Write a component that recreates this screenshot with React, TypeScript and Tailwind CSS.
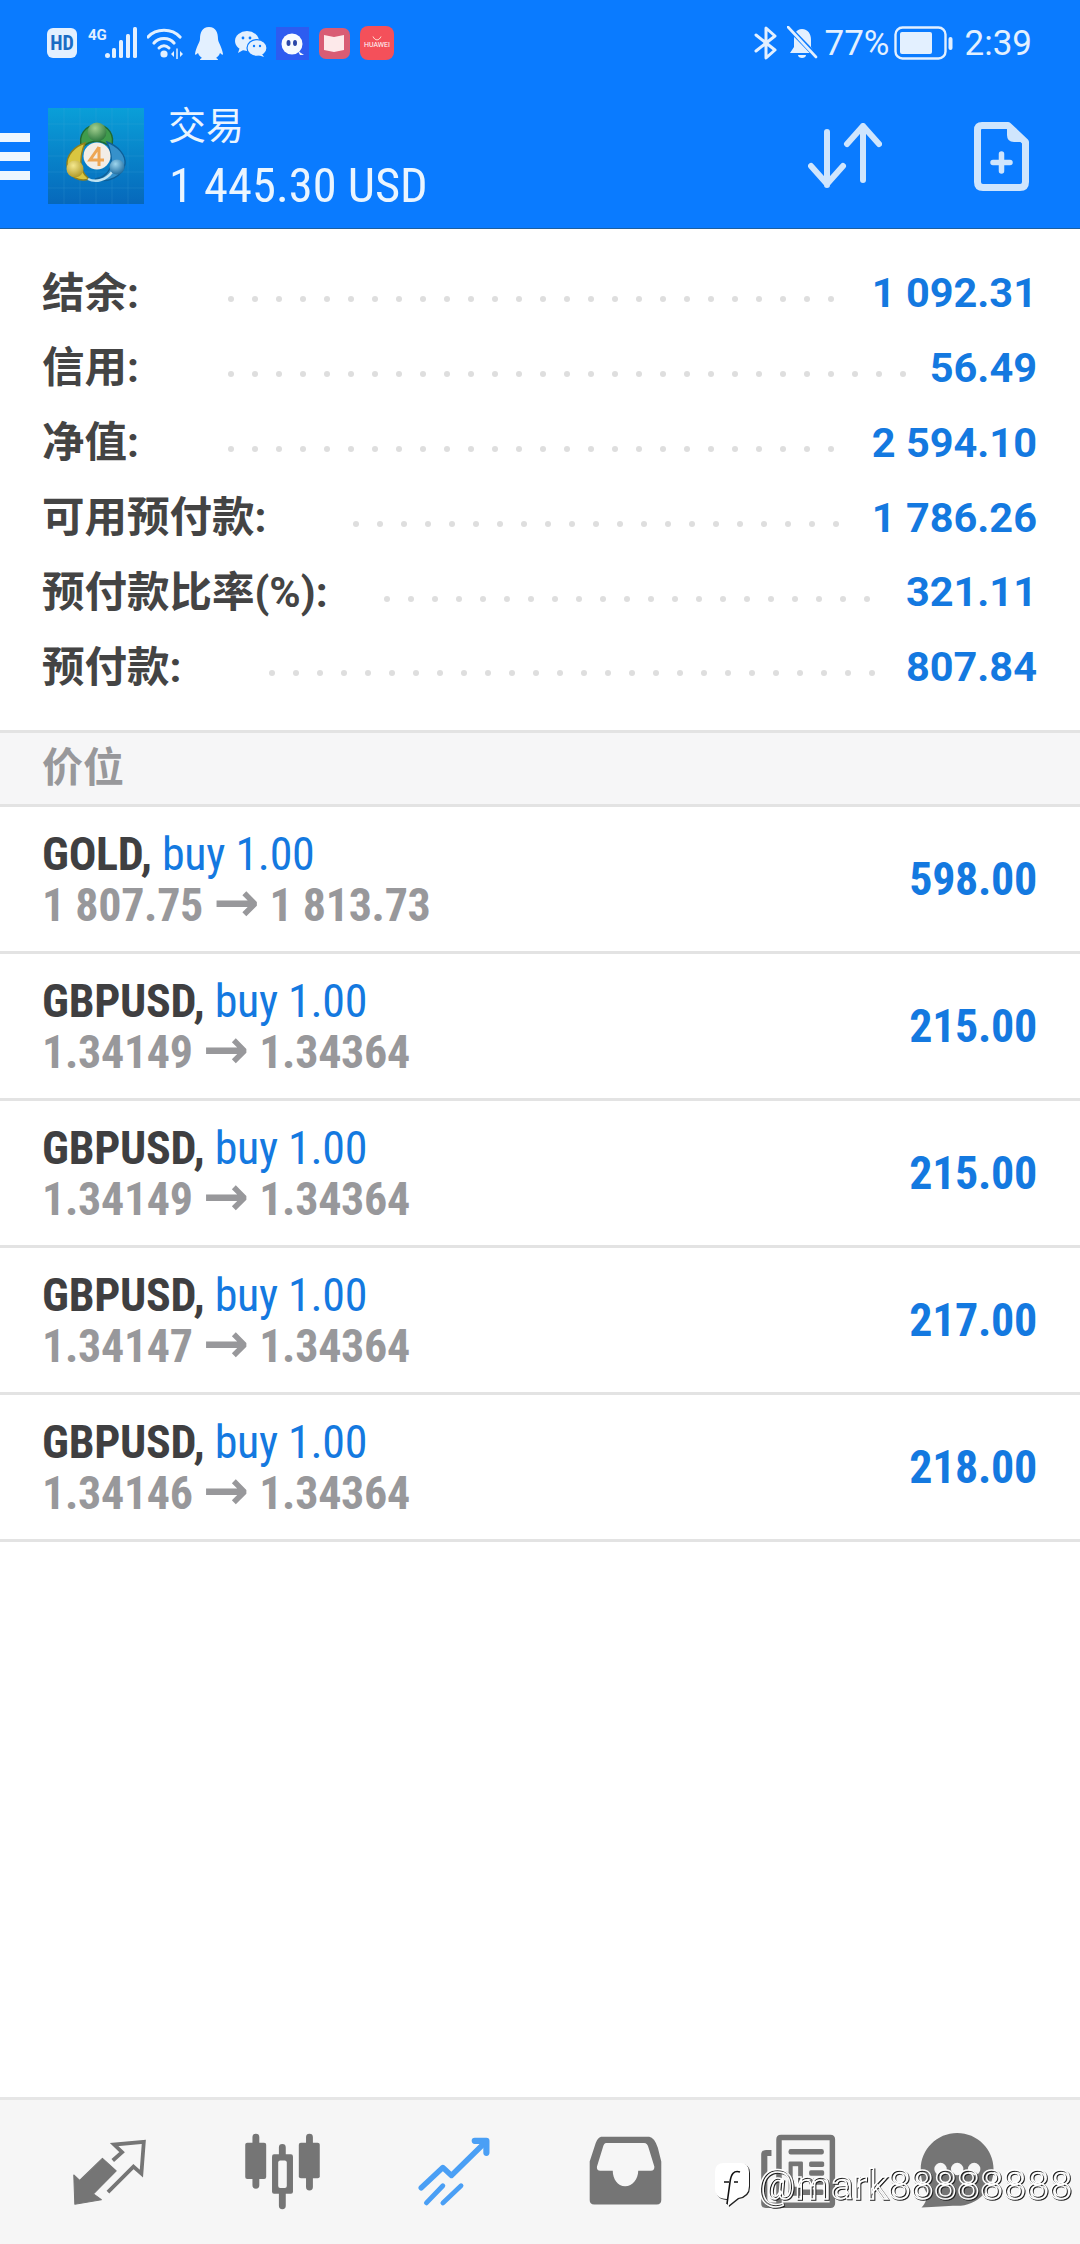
import React from "react";

const cond = "[font-stretch:75%]";

const accounts = [
  { label: "结余:", value: "1 092.31", w: "w-[186px]", n: 26 },
  { label: "信用:", value: "56.49", w: "w-[186px]", n: 29 },
  { label: "净值:", value: "2 594.10", w: "w-[186px]", n: 26 },
  { label: "可用预付款:", value: "1 786.26", w: "w-[311px]", n: 21 },
  { label: "预付款比率(%):", value: "321.11", w: "w-[342px]", n: 21 },
  { label: "预付款:", value: "807.84", w: "w-[227px]", n: 26 },
];

const trades = [
  { sym: "GOLD,", open: "1 807.75", close: "1 813.73", profit: "598.00" },
  { sym: "GBPUSD,", open: "1.34149", close: "1.34364", profit: "215.00" },
  { sym: "GBPUSD,", open: "1.34149", close: "1.34364", profit: "215.00" },
  { sym: "GBPUSD,", open: "1.34147", close: "1.34364", profit: "217.00" },
  { sym: "GBPUSD,", open: "1.34146", close: "1.34364", profit: "218.00" },
];

function Mt4Logo() {
  return (
    <svg width="96" height="96" viewBox="0 0 96 96" className="shrink-0">
      <defs>
        <linearGradient id="bgl" x1="0" y1="0" x2="0" y2="1">
          <stop offset="0" stopColor="#0a9fd8" />
          <stop offset="1" stopColor="#0668bb" />
        </linearGradient>
        <radialGradient id="gb" cx="0.4" cy="0.3" r="0.8">
          <stop offset="0" stopColor="#a3d08f" />
          <stop offset="1" stopColor="#1f6e35" />
        </radialGradient>
        <radialGradient id="yb" cx="0.4" cy="0.3" r="0.8">
          <stop offset="0" stopColor="#f4e88e" />
          <stop offset="1" stopColor="#a8901c" />
        </radialGradient>
        <radialGradient id="bb" cx="0.4" cy="0.3" r="0.8">
          <stop offset="0" stopColor="#9fd6ee" />
          <stop offset="1" stopColor="#0f5f96" />
        </radialGradient>
      </defs>
      <rect width="96" height="96" fill="url(#bgl)" />
      <path d="M16 0V96M32 0V96M48 0V96M64 0V96M80 0V96M0 16H96M0 32H96M0 48H96M0 64H96M0 80H96" stroke="#58b0e4" strokeOpacity="0.25" strokeWidth="0.7" />
      <path d="M34 40 C29 27 38 17 49 17 C60 17 68 27 63 40 C55 31 42 31 34 40Z" fill="#3f9b4c" stroke="#1f6a33" strokeWidth="1.4" />
      <path d="M37 35 C27 38 18 47 19 58 C21 70 32 74 41 71 C36 67 32 60 33 52 C33 45 35 40 37 35Z" fill="#d9c640" stroke="#8f7f1c" strokeWidth="1.4" />
      <path d="M59 34 C70 38 78 47 77 56 C75 68 60 76 47 71 C56 70 62 64 63 56 C64 48 62 41 59 34Z" fill="#3691cb" stroke="#0e5f98" strokeWidth="1.4" />
      <path d="M40 71 C48 75 58 72 64 64" fill="none" stroke="#bfe3f2" strokeWidth="2.5" />
      <circle cx="49" cy="24" r="9.5" fill="url(#gb)" />
      <circle cx="27" cy="61" r="8.5" fill="url(#yb)" />
      <circle cx="69" cy="59" r="7.5" fill="url(#bb)" />
      <circle cx="49" cy="48" r="13.5" fill="#f2ede6" />
      <path d="M51 39 L42 52 H56 M51 39 V58" fill="none" stroke="#eda654" strokeWidth="3" />
    </svg>
  );
}

function StatusLeft() {
  return (
    <div className="flex items-center ml-[47px] h-full">
      <div className="w-[30px] h-[30px] rounded-[6px] bg-[#e3f0ff] flex items-center justify-center text-[20px] font-bold text-[#1b6cc4] [font-family:Roboto,sans-serif] [font-stretch:75%] leading-none">HD</div>
      <svg width="50" height="32" viewBox="0 0 50 32" className="ml-[11px]" fill="#e3f0ff">
        <text x="0" y="13" fontSize="15" fontWeight="700" fontFamily="Roboto, sans-serif">4G</text>
        <circle cx="19.5" cy="28.5" r="2.5" />
        <rect x="24" y="21" width="4" height="10" rx="1.5" />
        <rect x="31" y="13" width="4" height="18" rx="1.5" />
        <rect x="38" y="7" width="4" height="24" rx="1.5" />
        <rect x="45" y="0" width="4" height="31" rx="1.5" />
      </svg>
      <svg width="38" height="32" viewBox="0 0 38 32" className="ml-[9px]" fill="none" stroke="#e3f0ff" strokeLinecap="round">
        <path d="M1 10 C9 1 25 1 33 10" strokeWidth="3.2" />
        <path d="M7 16 C12 10 22 10 27 16" strokeWidth="3.2" />
        <path d="M12 21 C15 18 19 18 22 21" strokeWidth="3" />
        <circle cx="17" cy="27" r="3.6" fill="#e3f0ff" stroke="none" />
        <path d="M27 24 L24 27 L27 30 Z M33 24 L36 27 L33 30 Z" fill="#e3f0ff" stroke="none" />
        <path d="M30 22 V32" strokeWidth="1.5" />
      </svg>
      <svg width="28" height="33" viewBox="0 0 28 33" className="ml-[10px]" fill="#e3f0ff">
        <path d="M14 0 C21 0 23 6 23 12 C23 15 27 20 28 27 C28 29 25 26 25 26 C24 29 22 30 21 31 C23 32 24 33 22 33 H6 C4 33 5 32 7 31 C6 30 4 29 3 26 C3 26 0 29 0 27 C1 20 5 15 5 12 C5 6 7 0 14 0Z" />
      </svg>
      <svg width="32" height="27" viewBox="0 0 32 27" className="ml-[12px]">
        <ellipse cx="12" cy="11" rx="12" ry="10" fill="#e3f0ff" />
        <path d="M5 17 L3 23 L10 19Z" fill="#e3f0ff" />
        <ellipse cx="22" cy="18" rx="10" ry="8.4" fill="#e3f0ff" stroke="#0a7bff" strokeWidth="1.2" />
        <path d="M27 24 L29 27 L23 25Z" fill="#e3f0ff" />
        <circle cx="8" cy="8" r="1.4" fill="#0a7bff" />
        <circle cx="15" cy="8" r="1.4" fill="#0a7bff" />
        <circle cx="19" cy="16" r="1.2" fill="#0a7bff" />
        <circle cx="25" cy="16" r="1.2" fill="#0a7bff" />
      </svg>
      <svg width="33" height="33" viewBox="0 0 33 33" className="ml-[9px]">
        <rect width="33" height="33" fill="#2d5cf0" />
        <circle cx="16" cy="17" r="10.5" fill="#f7fbff" />
        <path d="M22 24 L28 28 L24 28Z" fill="#f7fbff" />
        <ellipse cx="12.5" cy="16" rx="2" ry="3" fill="#2a47a8" />
        <ellipse cx="19" cy="16" rx="2" ry="3" fill="#2a47a8" />
      </svg>
      <div className="ml-[10px] w-[31px] h-[31px] rounded-[7px] bg-[#d95c74] flex items-center justify-center">
        <svg width="21" height="20" viewBox="0 0 21 20">
          <path d="M0 2 L10 4 L20 2 V17 L10 19 L0 17Z" fill="#fde9ea" />
        </svg>
      </div>
      <div className="ml-[10px] w-[34px] h-[34px] rounded-[8px] bg-[#f4505a] flex flex-col items-center justify-center">
        <svg width="10" height="5" viewBox="0 0 10 5" fill="none" stroke="#ffe" strokeWidth="0.8"><path d="M1 0.5 C3 5 7 5 9 0.5" /></svg>
        <span className="text-[7px] leading-[9px] text-white [font-family:Roboto,sans-serif]">HUAWEI</span>
      </div>
    </div>
  );
}

function StatusRight() {
  return (
    <div className="flex items-center mr-[48px] h-full text-[#e3f0ff] [font-family:Roboto,sans-serif] text-[35px] leading-none">
      <svg width="24" height="34" viewBox="0 0 24 34" fill="none" stroke="#e3f0ff" strokeWidth="3" strokeLinejoin="round" strokeLinecap="round">
        <path d="M2 9 L21 24 L12 32 V2 L21 10 L2 25" />
      </svg>
      <svg width="31" height="34" viewBox="0 0 31 34" className="ml-[9px]" fill="#e3f0ff">
        <path d="M15 3 C21 3 24 8 24 14 V21 L28 27 H3 L7 21 V14 C7 8 9 3 15 3Z" />
        <path d="M11 29 H19 C19 33 11 33 11 29Z" />
        <path d="M2 2 L30 31" stroke="#0a7bff" strokeWidth="5" />
        <path d="M1 1 L29 31" stroke="#e3f0ff" strokeWidth="2.6" strokeLinecap="round" />
      </svg>
      <span className="ml-[7px] w-[64px]">77%</span>
      <svg width="59" height="34" viewBox="0 0 59 34" className="ml-[5px]">
        <rect x="1.5" y="1.5" width="50" height="31" rx="7" fill="none" stroke="#e3f0ff" strokeWidth="2.4" />
        <rect x="6" y="6" width="32" height="22" rx="2" fill="#e3f0ff" />
        <rect x="54.5" y="11" width="4" height="13" rx="2" fill="#e3f0ff" />
      </svg>
      <span className="ml-[12px]">2:39</span>
    </div>
  );
}

function Swap() {
  return (
    <svg width="74" height="66" viewBox="0 0 74 66" fill="none" stroke="#cfe5fd" strokeWidth="6" strokeLinecap="round" strokeLinejoin="round">
      <path d="M19 9 V62 M3 43 L19 61 L35 43" />
      <path d="M55 3 V57 M39 21 L55 3 L71 21" />
    </svg>
  );
}

function NewDoc() {
  return (
    <svg width="55" height="69" viewBox="0 0 55 69" fill="none">
      <path d="M8 3.5 H34 L51.5 20 V60 Q51.5 65.5 46 65.5 H9 Q3.5 65.5 3.5 60 V8 Q3.5 3.5 8 3.5Z" stroke="#cfe5fd" strokeWidth="7" strokeLinejoin="round" />
      <path d="M33 2 L53 20 H40 Q33 20 33 13Z" fill="#cfe5fd" />
      <path d="M27.5 32 V49 M19 40.5 H36" stroke="#cfe5fd" strokeWidth="5.5" strokeLinecap="round" />
    </svg>
  );
}

const G = "#757575";
const Nav1 = () => (
  <svg width="76" height="69" viewBox="210 170 220 200">
    <path d="M215 280 L232 296 L298 232 L338 268 L272 335 L295 352 L218 365Z" fill={G} strokeLinejoin="round" stroke={G} strokeWidth="3" />
    <path d="M328 238 L355 214 L332 192 L418 184 L411 276 L388 256 L314 330" fill="none" stroke={G} strokeWidth="11" />
  </svg>
);
const Nav2 = () => (
  <svg width="81" height="79" viewBox="700 155 235 230" fill={G}>
    <path d="M740 170 V310 M817 200 V370 M896 170 V315" stroke={G} strokeWidth="20" strokeLinecap="round" />
    <rect x="709" y="186" width="61" height="106" rx="6" />
    <rect x="787" y="220" width="61" height="115" rx="6" />
    <rect x="865" y="186" width="61" height="104" rx="6" />
    <rect x="805" y="238" width="25" height="80" rx="6" fill="#f6f6f6" />
  </svg>
);
const Nav3 = () => (
  <svg width="78" height="72" viewBox="1205 160 225 210" fill="none" stroke="#4a9ff5" strokeLinecap="round" strokeLinejoin="round">
    <path d="M1222 314 L1285 255 L1310 278 L1405 185" strokeWidth="16" />
    <path d="M1378 177 H1412 V212" strokeWidth="18" />
    <path d="M1237 358 L1285 308 M1285 358 L1338 308" strokeWidth="14" />
  </svg>
);
const Nav4 = () => (
  <svg width="78" height="74" viewBox="140 160 225 215">
    <path fillRule="evenodd" fill={G} d="M180 168 H320 Q335 170 345 200 L355 240 V352 Q355 365 342 365 H160 Q147 365 147 352 V240 L160 200 Q168 170 180 168Z M195 186 H305 Q315 186 318 200 L335 255 Q335 267 325 267 H288 C288 290 272 312 250 312 C228 312 214 290 214 267 H178 Q167 267 168 255 L185 200 Q188 186 195 186Z" />
  </svg>
);
const Nav5 = () => (
  <svg width="79" height="77" viewBox="640 155 230 225" fill={G}>
    <path fillRule="evenodd" d="M704 160 H848 Q862 160 862 174 V360 Q862 374 848 374 H660 Q646 374 646 360 V218 Q646 205 660 205 H676 V222 H664 V358 H690 V174 Q690 160 704 160Z M706 176 V358 H846 V176Z" />
    <rect x="726" y="202" width="103" height="16" rx="6" />
    <rect x="726" y="238" width="42" height="100" rx="4" />
    <rect x="738" y="252" width="16" height="60" fill="#f6f6f6" />
    <rect x="786" y="238" width="44" height="16" rx="5" />
    <rect x="786" y="264" width="44" height="16" rx="5" />
    <rect x="786" y="290" width="44" height="16" rx="5" />
    <rect x="726" y="320" width="103" height="16" rx="5" />
  </svg>
);
const Nav6 = () => (
  <svg width="78" height="78" viewBox="1100 155 225 225">
    <path fill={G} d="M1213 158 C1271 158 1318 205 1318 263 C1318 321 1271 368 1213 368 C1180 368 1150 372 1110 373 C1122 360 1128 345 1125 330 C1114 312 1108 288 1108 263 C1108 205 1155 158 1213 158Z" />
    <circle cx="1165" cy="262" r="18" fill="#f6f6f6" />
    <circle cx="1213" cy="262" r="18" fill="#f6f6f6" />
    <circle cx="1262" cy="262" r="18" fill="#f6f6f6" />
  </svg>
);

export default function App() {
  return (
    <div className="relative w-[1080px] h-[2244px] flex flex-col bg-white overflow-hidden [font-family:Roboto,'Noto_Sans_CJK_SC',sans-serif]">
      <header className="h-[229px] bg-[#0a7bff] border-b border-[#1d5f9f] flex flex-col shrink-0">
        <div className="h-[86px] flex items-center justify-between">
          <StatusLeft />
          <StatusRight />
        </div>
        <div className="flex items-center h-[142px] pb-[2px]">
          <div className="w-[30px] flex flex-col gap-[10px]">
            <div className="h-[9px] bg-[#eef7ff]" />
            <div className="h-[9px] bg-[#eef7ff]" />
            <div className="h-[9px] bg-[#eef7ff]" />
          </div>
          <div className="ml-[18px]"><Mt4Logo /></div>
          <div className="ml-[25px] flex flex-col text-[#eaf5ff] flex-1">
            <div className="text-[38px] leading-[56px] h-[60px] -ml-[1px]">交易</div>
            <div className={`text-[48.5px] leading-[56px] ${cond}`}>1 445.30 USD</div>
          </div>
          <div className="mr-[51px] flex items-center gap-[92px]">
            <Swap />
            <NewDoc />
          </div>
        </div>
      </header>

      <section className="pt-[27px] pb-[25px] pl-[42px] pr-[43px] shrink-0">
        {accounts.map((a) => (
          <div key={a.label} className="flex items-center h-[74.8px]">
            <div className={`${a.w} shrink-0 font-bold text-[#444444] text-[42.5px]`}>{a.label}</div>
            <div className="flex gap-[18px] mt-[12px]">
              {Array.from({ length: a.n }).map((_, i) => (
                <span key={i} className="w-[6px] h-[6px] rounded-full bg-[#dedede]" />
              ))}
            </div>
            <div className="ml-auto font-bold text-[#1479e0] text-[41.5px]">{a.value}</div>
          </div>
        ))}
      </section>

      <div className="h-[77px] shrink-0 border-y-[3px] border-[#e3e3e3] bg-[#f6f6f7] flex items-center pl-[42px] pr-[43px] text-[41px] font-bold text-[#98989b]">价位</div>

      <section className="shrink-0">
        {trades.map((t, i) => (
          <div key={i} className="h-[147px] border-b-[3px] border-[#e3e3e3] flex items-center justify-between pl-[42px] pr-[43px] text-[46px] tracking-[-0.3px] leading-[51px]">
            <div className="pt-[3px]">
              <div className={cond}>
                <span className="font-bold text-[#3f3f41]">{t.sym}</span>{" "}
                <span className="text-[#1479e0]">buy 1.00</span>
              </div>
              <div className={`${cond} font-bold text-[#98989b]`}>
                {t.open} <span className="[font-family:'DejaVu_Sans',sans-serif] [font-stretch:100%] text-[55px] leading-[0]">→</span> {t.close}
              </div>
            </div>
            <div className={`${cond} font-bold text-[#1479e0] pt-[2px]`}>{t.profit}</div>
          </div>
        ))}
      </section>

      <div className="flex-1" />

      <nav className="h-[147px] shrink-0 border-t-[3px] border-[#e6e6e6] bg-[#f6f6f6] grid grid-cols-6 px-[24px] pb-[2px]">
        <div className="flex items-center justify-center"><Nav1 /></div>
        <div className="flex items-center justify-center"><Nav2 /></div>
        <div className="flex items-center justify-center"><Nav3 /></div>
        <div className="flex items-center justify-center"><Nav4 /></div>
        <div className="flex items-center justify-center"><Nav5 /></div>
        <div className="flex items-center justify-center pr-[26px]"><Nav6 /></div>
      </nav>

      <div className="absolute left-[714px] top-[2162px] flex items-center gap-[8px] [filter:drop-shadow(1px_1px_0_#222)]">
        <svg width="36" height="46" viewBox="0 0 36 46">
          <path d="M10 1 H26 Q35 1 35 10 V24 Q35 34 24 36 L14 44 L13 37 Q1 37 1 26 V10 Q1 1 10 1Z" fill="#fff" />
          <path d="M26 10 C20 8 17 12 16 20 L13 42 M10 20 H15 M20 20 H24" fill="none" stroke="#111" strokeWidth="1.6" />
        </svg>
        <span className="text-[41px] leading-none text-transparent [-webkit-text-stroke:1.5px_#ffffff] [font-family:Roboto,sans-serif]">@mark88888888</span>
      </div>
    </div>
  );
}
